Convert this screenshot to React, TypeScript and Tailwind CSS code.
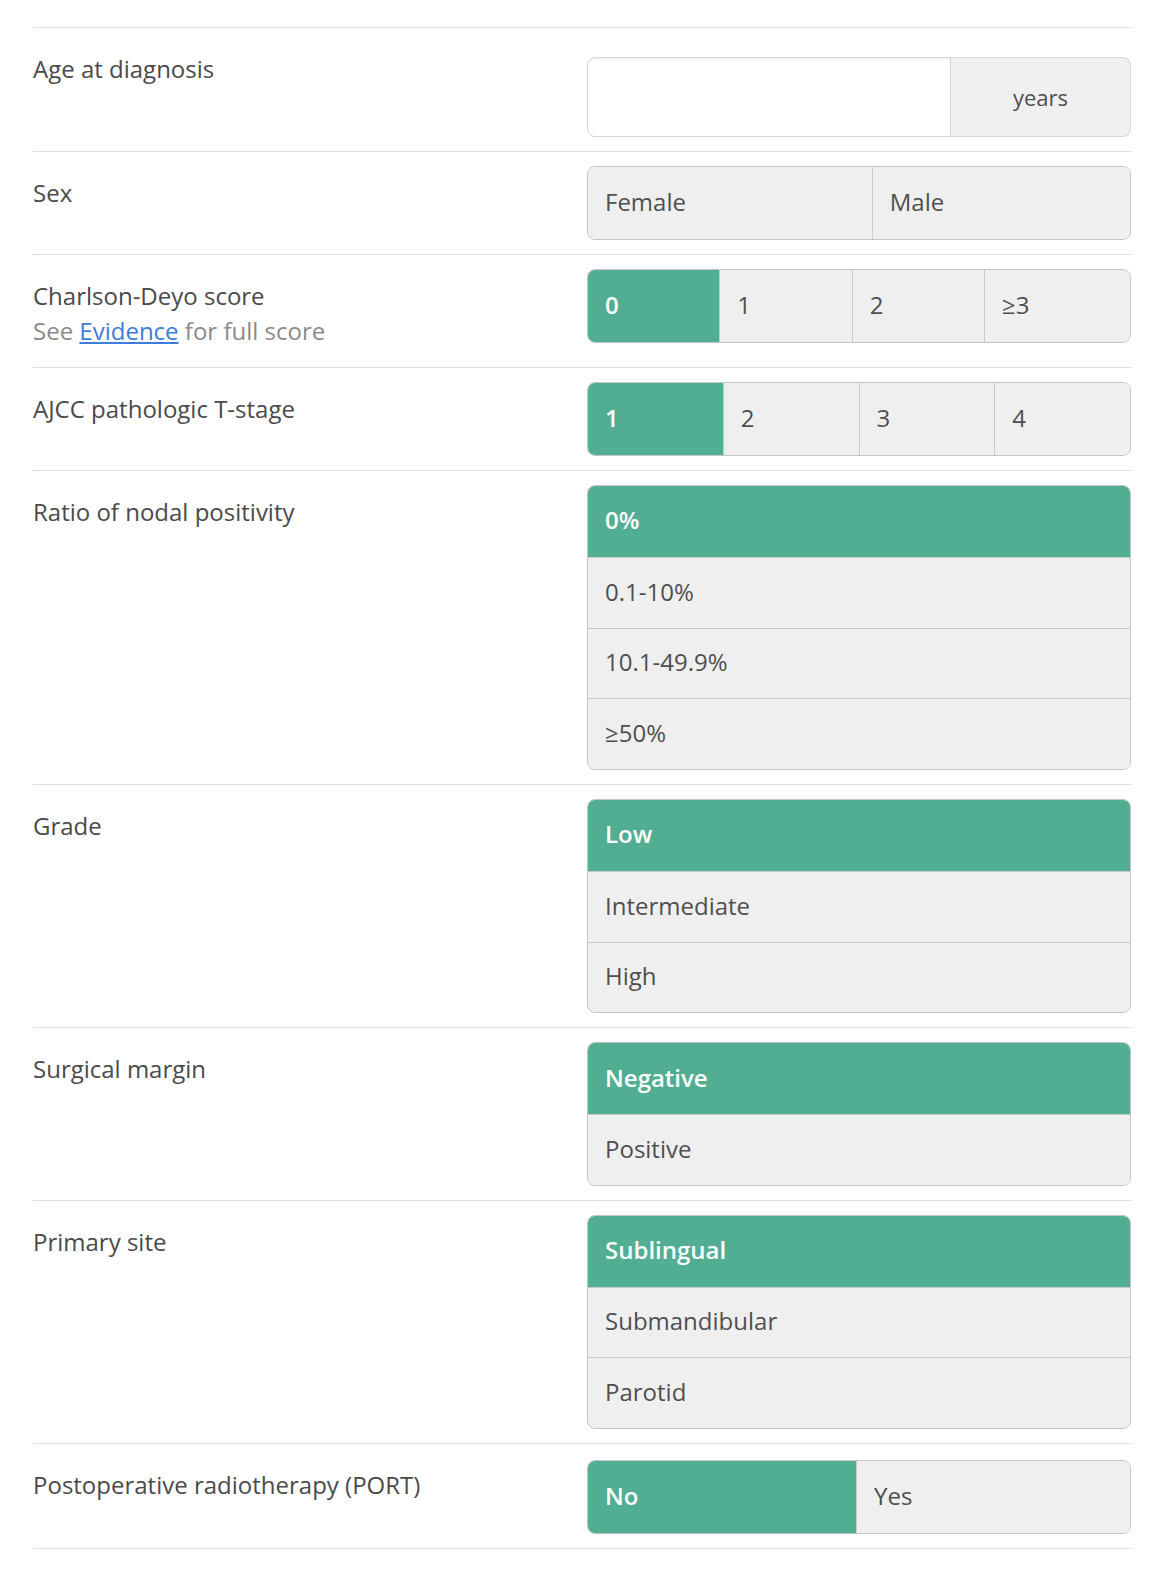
import React from 'react';

function Segmented({ options, selected }: { options: string[]; selected: number }) {
  return (
    <div className="flex h-[74px] rounded-[8px] border border-[#c4c4c4] overflow-hidden">
      {options.map((o, i) => (
        <div
          key={o}
          className={
            'flex-auto flex items-center pl-[17px] pb-[3px] text-[24px] ' +
            (i > 0 ? 'border-l border-[#cacaca] ' : '') +
            (i === selected ? 'bg-[#52ae93] text-white font-semibold' : 'bg-[#efefef] text-[#4f4f4f]')
          }
        >
          {o}
        </div>
      ))}
    </div>
  );
}

function Stacked({ options, selected }: { options: string[]; selected: number }) {
  return (
    <div className="flex flex-col rounded-[8px] border border-[#c4c4c4] overflow-hidden">
      {options.map((o, i) => (
        <div
          key={o}
          className={
            'h-[70.75px] flex items-center pl-[17px] pb-[2px] text-[24px] ' +
            (i > 0 ? 'border-t border-[#cacaca] ' : '') +
            (i === selected ? 'bg-[#52ae93] text-white font-semibold' : 'bg-[#efefef] text-[#4f4f4f]')
          }
        >
          {o}
        </div>
      ))}
    </div>
  );
}

function Row({
  label,
  sub,
  children,
  top = 'pt-0',
}: {
  label: string;
  sub?: React.ReactNode;
  children: React.ReactNode;
  top?: string;
}) {
  return (
    <div className="flex py-[14px] border-b border-[#dedede]">
      <div className={'w-[554px] shrink-0 pt-[11px] ' + (sub ? 'pb-[6px]' : '')}>
        <div className="text-[24px] leading-[32px] text-[#4a4a4a]">{label}</div>
        {sub && <div className="mt-[3px] text-[24px] leading-[32px] text-[#8a8a8a]">{sub}</div>}
      </div>
      <div className={'flex-1 ' + top}>{children}</div>
    </div>
  );
}

export default function App() {
  return (
    <div className="bg-white min-h-[1570px] pt-[27px] pl-[33px] pr-[29px]" style={{ fontFamily: '"Open Sans", Roboto, sans-serif' }}>
      <div className="border-t border-[#dedede]">
        {/* age */}
        <Row label="Age at diagnosis" top="pt-[15px]">
          <div className="flex h-[80px]">
            <div className="flex-1 rounded-l-[8px] border border-[#d6d6d6] bg-white shadow-[inset_0_1px_2px_rgba(0,0,0,0.08)]" />
            <div className="w-[180px] flex items-center justify-center rounded-r-[8px] border border-l-0 border-[#d6d6d6] bg-[#efefef] text-[22px] text-[#4f4f4f]">
              years
            </div>
          </div>
        </Row>

        <Row label="Sex">
          <Segmented options={['Female', 'Male']} selected={-1} />
        </Row>

        <Row
          label="Charlson-Deyo score"
          sub={
            <>
              See <a href="#" className="text-[#3d7ddc] underline">Evidence</a> for full score
            </>
          }
        >
          <Segmented options={['0', '1', '2', '≥3']} selected={0} />
        </Row>

        <Row label="AJCC pathologic T-stage">
          <Segmented options={['1', '2', '3', '4']} selected={0} />
        </Row>

        <Row label="Ratio of nodal positivity">
          <Stacked options={['0%', '0.1-10%', '10.1-49.9%', '≥50%']} selected={0} />
        </Row>

        <Row label="Grade">
          <Stacked options={['Low', 'Intermediate', 'High']} selected={0} />
        </Row>

        <Row label="Surgical margin">
          <Stacked options={['Negative', 'Positive']} selected={0} />
        </Row>

        <Row label="Primary site">
          <Stacked options={['Sublingual', 'Submandibular', 'Parotid']} selected={0} />
        </Row>

        <Row label="Postoperative radiotherapy (PORT)" top="pt-[2px]">
          <Segmented options={['No', 'Yes']} selected={0} />
        </Row>
      </div>
    </div>
  );
}
